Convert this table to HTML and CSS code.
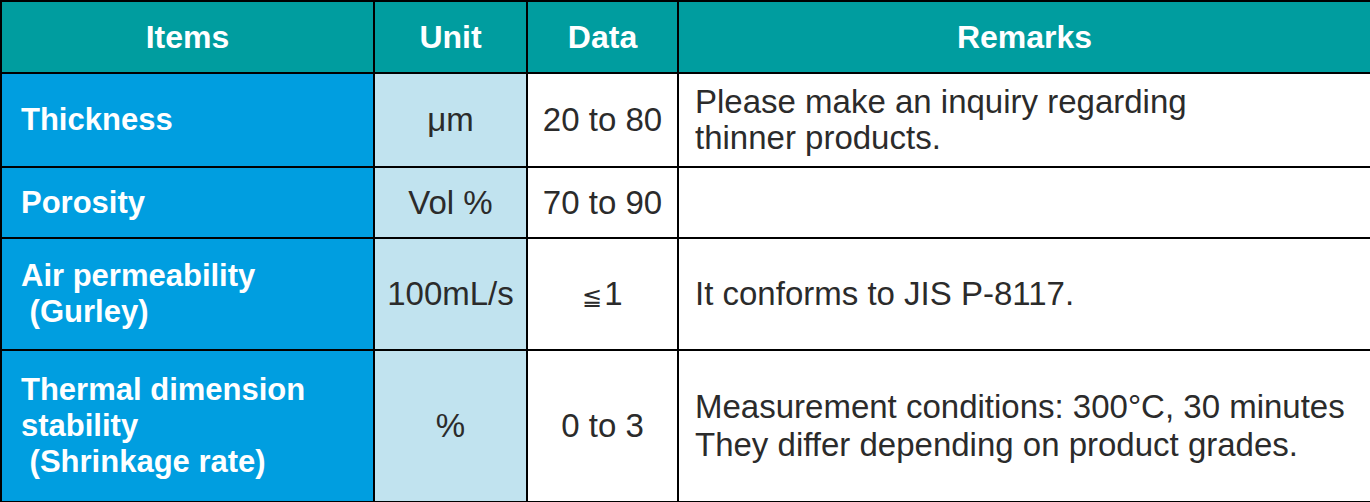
FILE: index.html
```html
<!DOCTYPE html>
<html lang="en">
<head>
<meta charset="utf-8">
<title>Specifications</title>
<link rel="stylesheet" href="styles.css">
</head>
<body>
<table class="spec">
  <colgroup>
    <col class="c-items">
    <col class="c-unit">
    <col class="c-data">
    <col class="c-remarks">
  </colgroup>
  <thead>
    <tr class="r-head">
      <th>Items</th>
      <th>Unit</th>
      <th>Data</th>
      <th>Remarks</th>
    </tr>
  </thead>
  <tbody>
    <tr class="r1">
      <td class="item">Thickness</td>
      <td class="unit">μm</td>
      <td class="data">20 to 80</td>
      <td class="remark">Please make an inquiry regarding<br>thinner products.</td>
    </tr>
    <tr class="r2">
      <td class="item">Porosity</td>
      <td class="unit">Vol %</td>
      <td class="data">70 to 90</td>
      <td class="remark"></td>
    </tr>
    <tr class="r3">
      <td class="item">Air permeability<br>&nbsp;(Gurley)</td>
      <td class="unit">100mL/s</td>
      <td class="data"><span class="sym">≦</span>1</td>
      <td class="remark">It conforms to JIS P-8117.</td>
    </tr>
    <tr class="r4">
      <td class="item">Thermal dimension<br>stability<br>&nbsp;(Shrinkage rate)</td>
      <td class="unit">%</td>
      <td class="data">0 to 3</td>
      <td class="remark">Measurement conditions: 300°C, 30 minutes<br>They differ depending on product grades.</td>
    </tr>
  </tbody>
</table>
</body>
</html>
```

FILE: styles.css
```css
html, body {
  margin: 0;
  padding: 0;
  background: #ffffff;
}

.spec {
  width: 1370px;
  border-collapse: collapse;
  table-layout: fixed;
  font-family: "Liberation Sans", Arial, sans-serif;
  color: #2b2b2b;
  font-size: 33px;
}

.c-items { width: 373px; }
.c-unit { width: 153px; }
.c-data { width: 151px; }
.c-remarks { width: 693px; }

.spec th,
.spec td {
  border: 2px solid #000000;
  padding: 0;
  vertical-align: middle;
  white-space: nowrap;
}

.spec th {
  background: #009d9f;
  color: #ffffff;
  font-weight: bold;
  font-size: 32px;
  text-align: center;
}

.r-head { height: 72px; }
.r1 { height: 94px; }
.r2 { height: 71px; }
.r3 { height: 112px; }
.r4 { height: 152px; }

.item {
  background: #009ee0;
  color: #ffffff;
  font-weight: bold;
  font-size: 31px;
  padding-left: 19px !important;
  line-height: 36px;
}

.unit {
  background: #c1e3ef;
  text-align: center;
}

.data {
  text-align: center;
}

.sym {
  font-size: 24px;
  margin-right: 2px;
}

.remark {
  padding-left: 16px !important;
  line-height: 36px;
}

.r4 .remark {
  line-height: 38px;
}
```
